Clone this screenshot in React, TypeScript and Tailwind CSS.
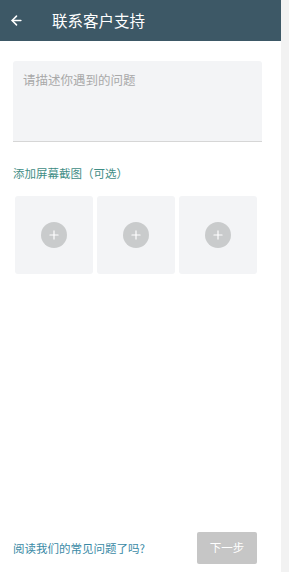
import { ArrowLeft, Plus } from 'lucide-react';

const App = () => {
    const tiles = [0, 1, 2];

    return (
        <div className="flex h-[572px] w-[289px] bg-white font-['Noto_Sans_CJK_SC',sans-serif]">
            <div className="flex w-[281px] flex-col">
                <header className="flex h-[41px] items-center bg-[#3d5866] pl-[9px]">
                    <ArrowLeft className="h-[15px] w-[15px] text-white" strokeWidth={2.5} />
                    <h1 className="ml-[28px] text-[15.5px] leading-none text-white">联系客户支持</h1>
                </header>

                <div className="ml-[13px] mt-[20px] h-[81px] w-[249px] rounded-t-[3px] border-b border-[#d6d6d6] bg-[#f3f4f6] px-[10px] pt-[10px]">
                    <p className="text-[12.5px] leading-[18px] text-[#a9a9a9]">请描述你遇到的问题</p>
                </div>

                <p className="ml-[13px] mt-[23px] text-[11.5px] leading-[16px] text-[#3f8d85]">添加屏幕截图（可选）</p>

                <div className="ml-[15px] mt-[15px] flex gap-[4px]">
                    {tiles.map((t) => (
                        <div key={t} className="flex h-[78px] w-[78px] items-center justify-center rounded-[3px] bg-[#f3f4f6]">
                            <div className="flex h-[26px] w-[26px] items-center justify-center rounded-full bg-[#c9cbcc]">
                                <Plus className="h-[14px] w-[14px] text-white" strokeWidth={2} />
                            </div>
                        </div>
                    ))}
                </div>

                <div className="mt-auto mb-[8px] flex items-center justify-between pl-[13px] pr-[24px]">
                    <a className="text-[11.5px] leading-[16px] text-[#3a8aa6]">阅读我们的常见问题了吗?</a>
                    <button className="h-[32px] w-[60px] rounded-[2px] bg-[#c6c6c6] text-[11.5px] text-white">下一步</button>
                </div>
            </div>
            <div className="w-[8px] bg-[#f2f2f2]"></div>
        </div>
    );
};

export default App;
